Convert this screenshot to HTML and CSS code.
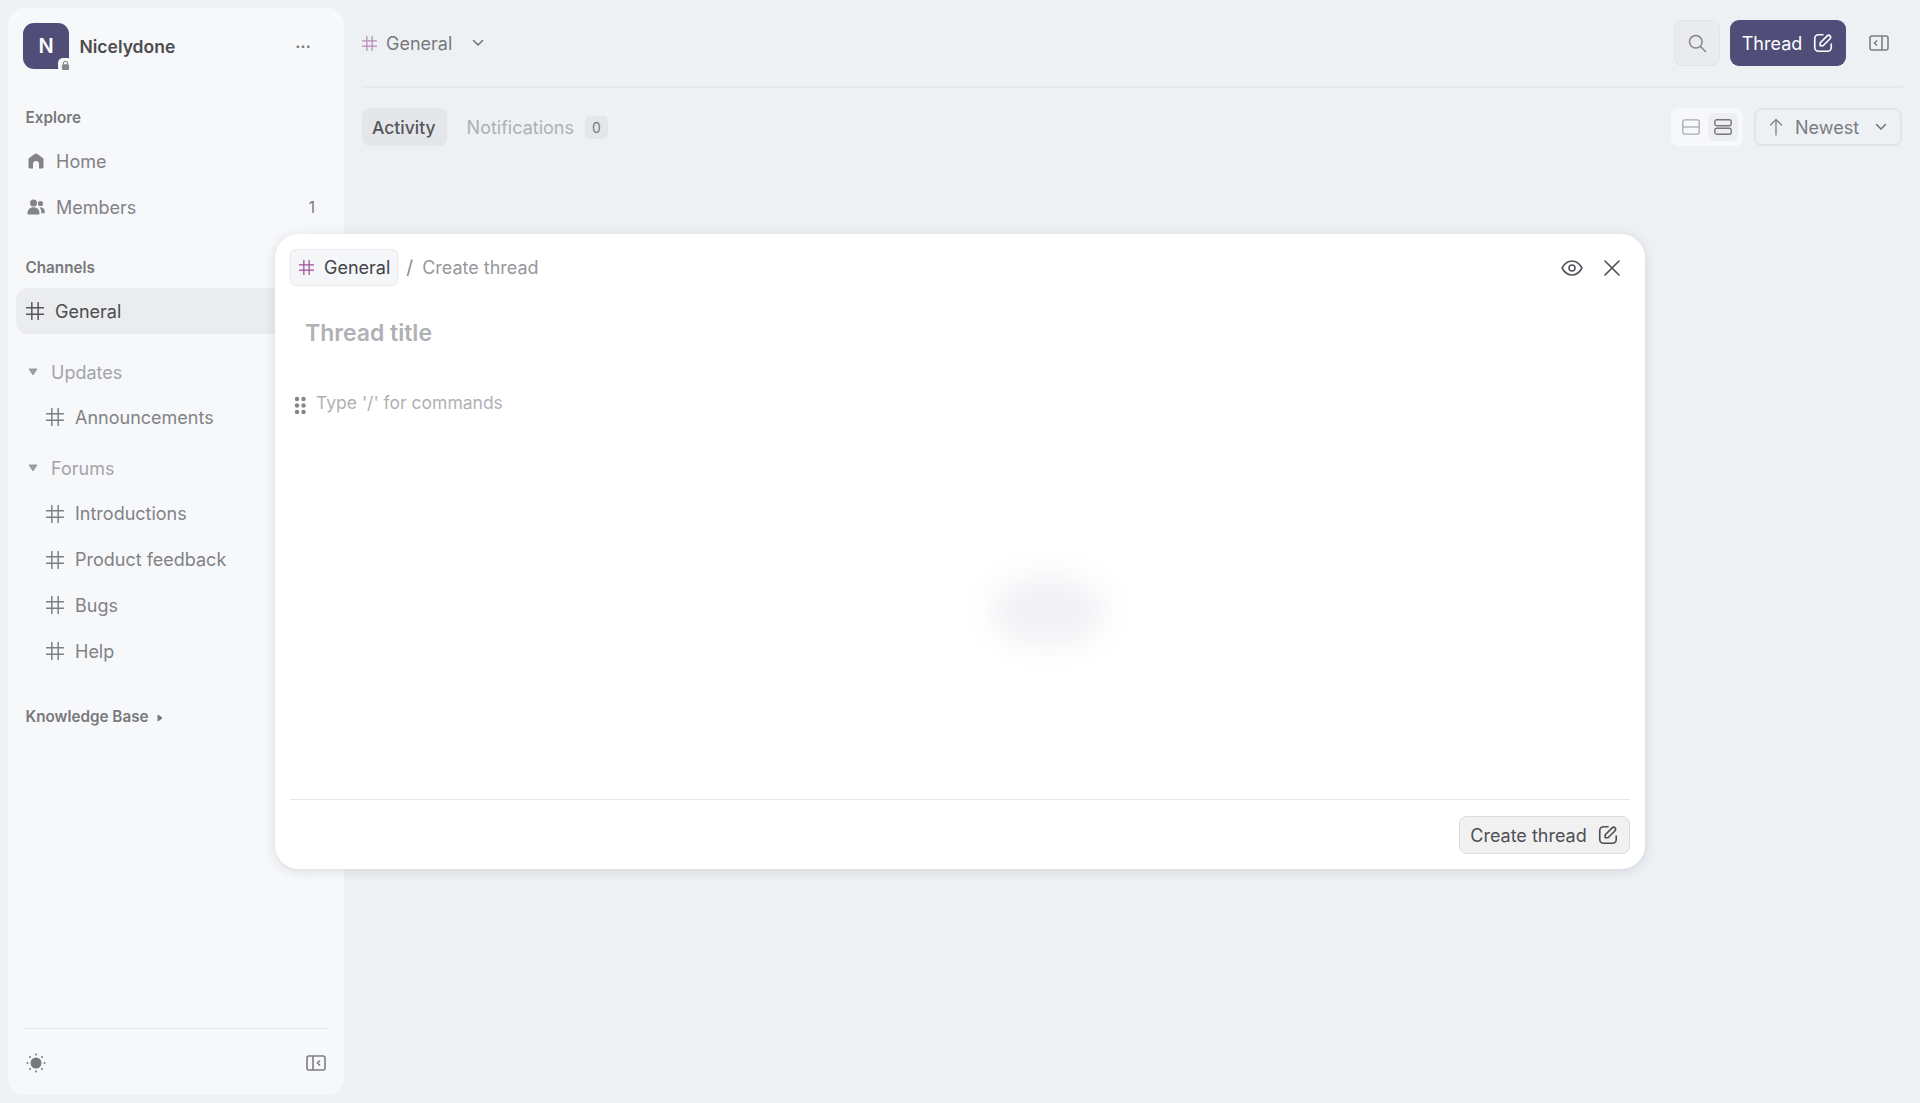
FILE: index.html
```html
<!DOCTYPE html>
<html lang="en">
<head>
<meta charset="utf-8">
<title>General - Nicelydone</title>
<link rel="stylesheet" href="styles.css">
</head>
<body>
<svg class="defs" width="0" height="0" aria-hidden="true">
  <symbol id="hash" viewBox="0.500 0.500 17 17"><path d="M1 6h16M1 12h16M6 1v16M12 1v16" fill="none" stroke="currentColor" stroke-width="1.400" stroke-linecap="round"/></symbol>
  <symbol id="edit" viewBox="0 0 20 20"><path d="M10 2.5H6a3.5 3.5 0 0 0-3.5 3.5v8A3.5 3.5 0 0 0 6 17.500h8a3.500 3.500 0 0 0 3.500-3.500v-3" fill="none" stroke="currentColor" stroke-width="1.500" stroke-linecap="round"/><path d="M7.500 12.500v-2.700l6.300-6.300a1.800 1.800 0 0 1 2.600 2.600l-6.300 6.400z" fill="none" stroke="currentColor" stroke-width="1.500" stroke-linejoin="round"/></symbol>
  <symbol id="panel" viewBox="0 0 20 16"><rect x="1" y="1" width="18" height="14" rx="2" fill="none" stroke="currentColor" stroke-width="1.600"/><path d="M7 1v14" stroke="currentColor" stroke-width="1.600"/><path d="M14 5.500 11.500 8l2.500 2.500" fill="none" stroke="currentColor" stroke-width="1.600"/></symbol>
  <symbol id="panel-r" viewBox="0 0 20 16"><rect x="1" y="1" width="18" height="14" rx="2" fill="none" stroke="currentColor" stroke-width="1.600"/><path d="M13 1v14" stroke="currentColor" stroke-width="1.600"/><path d="M8 5.500 5.500 8 8 10.500" fill="none" stroke="currentColor" stroke-width="1.600"/></symbol>
  <symbol id="chev" viewBox="0 0 12 8"><path d="M1.500 1.500 6 6l4.500-4.500" fill="none" stroke="currentColor" stroke-width="1.500" stroke-linecap="round" stroke-linejoin="round"/></symbol>
  <symbol id="tri" viewBox="0 0 10 8"><path d="M1 1h8L5 7z" fill="currentColor" stroke="currentColor" stroke-linejoin="round"/></symbol>
</svg>

<div class="app">
  <aside class="sidebar">
    <div class="team">
      <div class="avatar">N
        <span class="lock"><svg viewBox="0 0 10 12" width="9" height="11"><path d="M2.800 5V3.500a2.200 2.200 0 0 1 4.400 0V5" fill="none" stroke="#85868a" stroke-width="1.200"/><rect x="1" y="4.500" width="8" height="6.500" rx="1.500" fill="#85868a"/></svg></span>
      </div>
      <span class="team-name">Nicelydone</span>
      <span class="dots">···</span>
    </div>

    <div class="label label-explore">Explore</div>
    <a class="row"><svg class="row-ico" viewBox="0 0 18 18" width="18" height="18"><path d="M1.500 7.500Q1.500 6.500 2.500 5.800L8 1.800q1-.7 2 0l5.500 4q1 .7 1 1.700V15a1.500 1.500 0 0 1-1.500 1.500H12V12a3 3 0 0 0-6 0v4.500H3A1.500 1.500 0 0 1 1.500 15z" fill="#838488"/></svg><span>Home</span></a>
    <a class="row"><svg class="row-ico" viewBox="0 0 18 18" width="18" height="18"><circle cx="6.500" cy="5" r="3.500" fill="#838488"/><path d="M.5 15.500c0-4.200 2.500-6.300 6-6.300s6 2.100 6 6.300c0 .6-.4 1-1 1h-10c-.6 0-1-.4-1-1z" fill="#838488"/><circle cx="13.500" cy="5.500" r="2.600" fill="#838488"/><path d="M14 9.300c2.400.2 3.800 2 3.800 5 0 .6-.4 1-1 1h-2.500c0-2.500-.2-4.300-1.700-5.600z" fill="#838488"/></svg><span>Members</span><span class="count">1</span></a>

    <div class="label label-channels">Channels</div>
    <a class="row row-active"><svg class="hash-lg"><use href="#hash"/></svg><span>General</span></a>

    <div class="row group group-first"><svg class="tri"><use href="#tri"/></svg><span>Updates</span></div>
    <a class="row sub"><svg class="hash-lg"><use href="#hash"/></svg><span>Announcements</span></a>

    <div class="row group group-next"><svg class="tri"><use href="#tri"/></svg><span>Forums</span></div>
    <a class="row sub"><svg class="hash-lg"><use href="#hash"/></svg><span>Introductions</span></a>
    <a class="row sub"><svg class="hash-lg"><use href="#hash"/></svg><span>Product feedback</span></a>
    <a class="row sub"><svg class="hash-lg"><use href="#hash"/></svg><span>Bugs</span></a>
    <a class="row sub"><svg class="hash-lg"><use href="#hash"/></svg><span>Help</span></a>

    <div class="label label-kb">Knowledge Base <svg class="tri-right" viewBox="0 0 6 8" width="6" height="8"><path d="M1 1v6l4-3z" fill="currentColor" stroke="currentColor" stroke-linejoin="round"/></svg></div>

    <div class="side-foot">
      <svg viewBox="0 0 20 20" width="20" height="20"><circle cx="10" cy="10" r="5.500" fill="#77787c"/><g fill="#77787c"><circle cx="10" cy="1.500" r="1"/><circle cx="10" cy="18.500" r="1"/><circle cx="1.500" cy="10" r="1"/><circle cx="18.500" cy="10" r="1"/><circle cx="4" cy="4" r="1"/><circle cx="16" cy="4" r="1"/><circle cx="4" cy="16" r="1"/><circle cx="16" cy="16" r="1"/></g></svg>
      <svg class="panel-ico"><use href="#panel"/></svg>
    </div>
  </aside>

  <main class="main">
    <header class="top">
      <div class="crumb">
        <svg class="hash-sm hash-faded"><use href="#hash"/></svg>
        <span>General</span>
        <svg class="chev"><use href="#chev"/></svg>
      </div>
      <div class="top-actions">
        <button class="search"><svg viewBox="0 0 20 20" width="20" height="20"><circle cx="8.800" cy="8.800" r="6.300" fill="none" stroke="#85868b" stroke-width="1.500"/><path d="m13.500 13.500 5 5" stroke="#85868b" stroke-width="1.500" stroke-linecap="round"/></svg></button>
        <button class="thread">Thread <svg class="edit"><use href="#edit"/></svg></button>
        <svg class="panel-ico panel-top"><use href="#panel-r"/></svg>
      </div>
    </header>

    <div class="tools">
      <div class="tabs">
        <span class="tab tab-on">Activity</span>
        <span class="tab">Notifications</span>
        <span class="badge">0</span>
      </div>
      <div class="tool-right">
        <div class="toggle">
          <span class="toggle-btn"><svg viewBox="0 0 18 16" width="18" height="16"><rect x=".8" y=".8" width="16.400" height="14.400" rx="2" fill="none" stroke="#a9aaae" stroke-width="1.300"/><path d="M1 8h16" stroke="#a9aaae" stroke-width="1.300"/></svg></span>
          <span class="toggle-btn toggle-on"><svg viewBox="0 0 18 16" width="18" height="16"><rect x=".8" y=".8" width="16.400" height="6" rx="2" fill="none" stroke="#77787d" stroke-width="1.400"/><rect x=".8" y="9.200" width="16.400" height="6" rx="2" fill="none" stroke="#77787d" stroke-width="1.400"/></svg></span>
        </div>
        <button class="sort">
          <svg viewBox="0 0 14 18" width="14" height="18"><path d="M7 17V1.500M1.500 7 7 1.500 12.500 7" fill="none" stroke="#85868b" stroke-width="1.400" stroke-linecap="round" stroke-linejoin="round"/></svg>
          <span>Newest</span>
          <svg class="chev chev-sort"><use href="#chev"/></svg>
        </button>
      </div>
    </div>
  </main>

  <section class="modal">
    <div class="modal-head">
      <span class="chip"><svg class="hash-sm"><use href="#hash"/></svg>General</span>
      <span class="slash">/</span>
      <span class="modal-crumb">Create thread</span>
      <span class="modal-icons">
        <svg viewBox="0 0 22 16" width="22" height="16"><path d="M1 8c2.500-4.500 6-7 10-7s7.500 2.500 10 7c-2.500 4.500-6 7-10 7S3.500 12.500 1 8z" fill="none" stroke="#55565b" stroke-width="1.600" stroke-linejoin="round"/><circle cx="11" cy="8" r="3" fill="none" stroke="#55565b" stroke-width="1.600"/></svg>
        <svg viewBox="0 0 18 18" width="18" height="18"><path d="M2 2l14 14M16 2 2 16" stroke="#4c4d52" stroke-width="1.600" stroke-linecap="round"/></svg>
      </span>
    </div>
    <div class="title-ph">Thread title</div>
    <div class="editor">
      <svg viewBox="0 0 12 18" width="12" height="18"><g fill="#85868c"><circle cx="3" cy="3" r="2.200"/><circle cx="9.500" cy="3" r="2.200"/><circle cx="3" cy="9.500" r="2.200"/><circle cx="9.500" cy="9.500" r="2.200"/><circle cx="3" cy="16" r="2.200"/><circle cx="9.500" cy="16" r="2.200"/></g></svg>
      <span>Type '/' for commands</span>
    </div>
    <div class="modal-foot">
      <button class="create">Create thread <svg class="edit"><use href="#edit"/></svg></button>
    </div>
    <div class="smudge"></div>
  </section>
</div>
</body>
</html>
```

FILE: styles.css
```css
* { box-sizing: border-box; }
html, body { margin: 0; height: 100%; }
body {
  background: #eef1f4;
  font-family: Inter, "Liberation Sans", sans-serif;
  color: #7d7e82;
  overflow: hidden;
}
.defs { position: absolute; }
button { font: inherit; cursor: pointer; }
.app { display: flex; height: 1103px; position: relative; }

/* sidebar */
.sidebar {
  width: 336px;
  height: 1087px;
  margin: 8px 0 0 8px;
  flex: none;
  background: #f7f8fa;
  border-radius: 16px;
  padding: 15px 8px 0;
  display: flex;
  flex-direction: column;
}
.team { display: flex; align-items: center; height: 46px; padding-left: 7px; }
.avatar {
  width: 46px; height: 46px; border-radius: 11px;
  background: #504e78; color: #fff;
  display: flex; align-items: center; justify-content: center;
  font-size: 20px; font-weight: 600;
  position: relative;
}
.lock {
  position: absolute; right: -3px; bottom: -3px;
  width: 14px; height: 14px; border-radius: 5px;
  background: #f7f8fa;
  display: flex; align-items: center; justify-content: center;
}
.team-name { margin-left: 10.500px; font-size: 17.500px; font-weight: 600; color: #4b4c50; }
.dots { margin-left: auto; margin-right: 25px; font-size: 15px; font-weight: 700; color: #77787c; letter-spacing: .2px; }

.label { font-size: 15.250px; font-weight: 600; line-height: 20px; color: #77787c; padding-left: 9.500px; height: 20px; }
.label-explore { margin-top: 39px; margin-bottom: 10px; }
.label-channels { margin-top: 27.500px; margin-bottom: 10.500px; }
.label-kb { margin-top: 33px; display: flex; align-items: center; gap: 8px; }
.tri-right { margin-top: 1px; }

.row {
  display: flex; align-items: center;
  height: 46px; padding-left: 10px; flex: none;
  font-size: 18px; color: #818286;
  border-radius: 12px;
}
.row-ico { margin-right: 10px; width: 20px; }
.count { margin-left: auto; margin-right: 21px; font-size: 15.500px; color: #77787c; }
.hash-lg { width: 18px; height: 18px; margin-right: 11px; flex: none; color: #7d7e82; }
.row-active { background: #ebecee; color: #4b4c50; }
.row-active .hash-lg { color: #55565a; }
.group { color: #a3a4a8; padding-left: 12px; }
.group-first { margin-top: 15px; margin-bottom: -1px; }
.group-next { margin-top: 5px; }
.tri { width: 10px; height: 8px; margin-right: 13px; color: #9d9ea2; }
.sub { padding-left: 30px; }
.sub ~ .sub { height: 45.750px; }

.side-foot {
  margin: auto 7px 22px;
  border-top: 1px solid #e6e7ea;
  padding: 24px 3px 0 3px;
  height: 20px;
  display: flex; justify-content: space-between; align-items: flex-start;
  box-sizing: content-box;
}
.panel-ico { width: 20px; height: 16px; color: #7d7e82; margin-top: 2px; }

/* main */
.main { flex: 1; padding: 0 17px 0 18px; min-width: 0; }
.top {
  height: 88px;
  border-bottom: 2px solid #e6e9ec;
  display: flex; align-items: flex-start; justify-content: space-between;
  padding-top: 20px;
}
.crumb { display: flex; align-items: center; height: 46px; font-size: 18px; color: #77787f; }
.hash-sm { width: 15px; height: 15px; color: #9e4f9c; margin-right: 10px; flex: none; }
.hash-faded { opacity: .65; margin-right: 9px; }
.chev { width: 12px; height: 8px; color: #6f7075; margin-left: 20px; }
.top-actions { display: flex; align-items: center; height: 46px; }
.search {
  width: 46px; height: 46px; border-radius: 8px;
  border: 1px solid #e2e4e7; background: #e9ebee;
  display: flex; align-items: center; justify-content: center; padding: 0;
}
.thread {
  width: 116px; height: 46px; margin-left: 10px;
  border: 0; border-radius: 9px;
  background: #504e78; color: #fff;
  font-size: 18px; font-weight: 400;
  display: flex; align-items: center; justify-content: center; gap: 10px;
  padding: 0;
}
.edit { width: 22px; height: 22px; flex: none; }
.panel-top { margin-left: 23px; margin-right: 14px; margin-top: 0; }

.tools { display: flex; justify-content: space-between; margin-top: 20px; height: 38px; }
.tabs { display: flex; align-items: center; font-size: 18px; }
.tab { height: 38px; padding: 0 10px; display: flex; align-items: center; color: #aeafb3; border-radius: 8px; }
.tab-on { background: #e4e6e9; color: #55565b; font-size: 17.500px; font-weight: 500; padding-right: 11px; margin-right: 10px; }
.badge {
  margin-left: 1px;
  width: 23px; height: 23px; border-radius: 5px;
  background: #e4e6e9; color: #77787c;
  font-size: 14px;
  display: flex; align-items: center; justify-content: center;
}
.tool-right { display: flex; gap: 11px; margin-right: 1px; }
.toggle {
  width: 72px; height: 38px; background: #f7f8fa; border-radius: 8px;
  display: flex; align-items: center; padding: 0 5px; gap: 1px;
}
.toggle-btn { width: 31px; height: 28px; border-radius: 6px; display: flex; align-items: center; justify-content: center; }
.toggle-on { background: #eeeff1; }
.sort {
  width: 148px; height: 38px; border: 2px solid #e2e4e7; border-radius: 8px;
  background: transparent; color: #7a7b80; font-size: 18px;
  display: flex; align-items: center; padding: 0 13px;
}
.sort span { margin-left: 12px; }
.chev-sort { margin-left: auto; color: #6f7075; }

/* modal */
.modal {
  position: absolute; left: 275px; top: 234px;
  width: 1370px; height: 635px;
  background: #fff; border-radius: 24px;
  box-shadow: 0 2px 12px rgba(30, 35, 50, .14);
  padding: 15px;
  display: flex; flex-direction: column;
}
.modal-head { display: flex; align-items: center; height: 37px; font-size: 18px; }
.chip {
  display: flex; align-items: center; height: 37px; padding: 0 7px 0 8px;
  background: #f4f6f8; border: 1px solid #e8eaed; border-radius: 6px;
  color: #43444a;
}
.slash { margin-left: 8px; color: #85868b; font-size: 19px; }
.modal-crumb { margin-left: 9px; color: #96979b; }
.modal-icons { margin-left: auto; margin-right: 9px; display: flex; align-items: center; gap: 20px; }
.title-ph {
  margin: 32px 0 0 15px; font-size: 23px; font-weight: 600; line-height: 30px; color: #b0b1b4;
}
.editor {
  display: flex; align-items: flex-start; gap: 10px;
  margin: 44px 0 0 4px; font-size: 17.500px; line-height: 22px; color: #b0b1b5;
}
.editor svg { margin-top: 4px; flex: none; }
.modal-foot {
  margin-top: auto;
  border-top: 1px solid #e6e7e9;
  padding-top: 16px;
  display: flex; justify-content: flex-end;
  height: 55px;
}
.create {
  width: 171px; height: 38px; border-radius: 8px;
  border: 1px solid #dadbde; background: #f1f1f2;
  color: #4e4f54; font-size: 18px;
  display: flex; align-items: center; justify-content: center; gap: 10px; padding: 0;
}
.smudge {
  position: absolute; left: 715px; top: 341px;
  width: 116px; height: 72px; border-radius: 50%;
  background: #f2f2f6; filter: blur(15px);
}
```
